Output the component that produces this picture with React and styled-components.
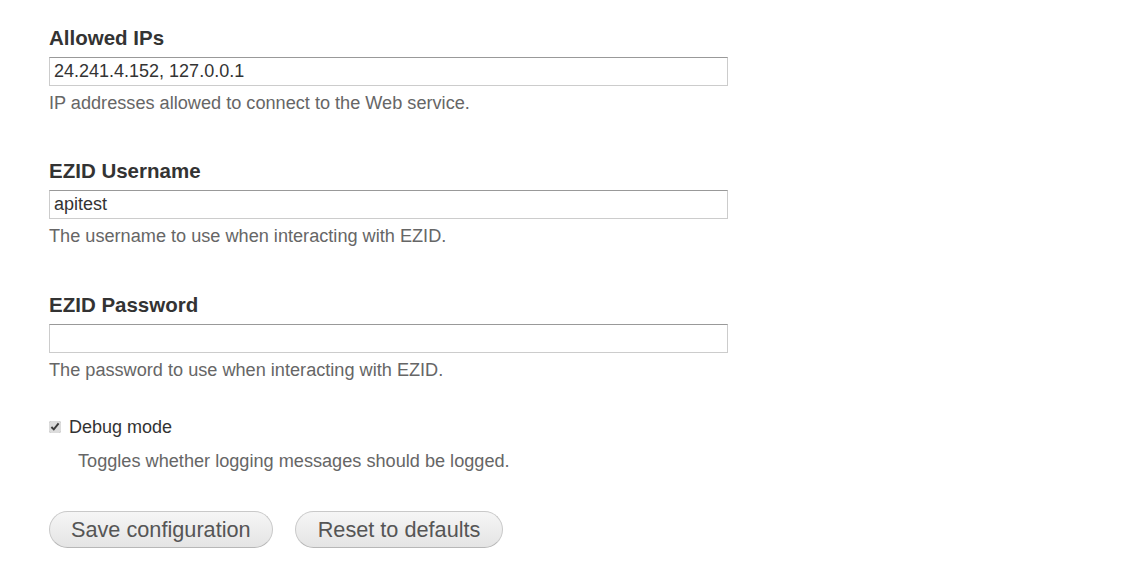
import styled, { createGlobalStyle } from 'styled-components';

const GlobalStyle = createGlobalStyle`
  body {
    margin: 0;
    background: #fff;
    font-family: "Liberation Sans", Arial, sans-serif;
    color: #333;
  }
`;

const Form = styled.form`
  padding: 24px 49px 0;
  width: 679px;
`;

const FormItem = styled.div`
  margin-bottom: ${(props) => props.$gap || 44}px;
`;

const Label = styled.label`
  display: block;
  font-size: 20.5px;
  font-weight: bold;
  color: #333;
  line-height: 28px;
  margin-bottom: 5px;
`;

const TextInput = styled.input`
  box-sizing: border-box;
  display: block;
  width: 679px;
  height: 29px;
  margin: 0;
  padding: 2px 4px;
  border: 1px solid #ccc;
  border-top-color: #999;
  border-radius: 0;
  font-family: "Liberation Sans", Arial, sans-serif;
  font-size: 18px;
  color: #333;
  outline: none;
`;

const Description = styled.div`
  font-size: 18.15px;
  line-height: 22px;
  color: #666;
  margin-top: ${(props) => (props.$indent ? 11 : 6)}px;
  padding-left: ${(props) => (props.$indent ? 29 : 0)}px;
`;

const CheckRow = styled.label`
  display: flex;
  align-items: center;
  gap: 8px;
  font-size: 18px;
  color: #333;
  line-height: 24px;
`;

const Checkbox = styled.input`
  width: 12px;
  height: 12px;
  margin: 0;
  accent-color: #dcdcdc;
`;

const Actions = styled.div`
  display: flex;
  gap: 22px;
`;

const Button = styled.button`
  height: 37px;
  padding: 0 ${(props) => (props.$wide ? 22 : 21)}px;
  border: 1px solid #c9c9c9;
  border-bottom-color: #b7b7b7;
  border-radius: 20px;
  background: linear-gradient(#f6f6f6, #e4e4e4);
  font-family: "Liberation Sans", Arial, sans-serif;
  font-size: 21.7px;
  color: #555;
  cursor: pointer;
`;

export default function App() {
  return (
    <>
      <GlobalStyle />
      <Form onSubmit={(e) => e.preventDefault()}>
        <FormItem $gap={43}>
          <Label>Allowed IPs</Label>
          <TextInput defaultValue="24.241.4.152, 127.0.0.1" />
          <Description>IP addresses allowed to connect to the Web service.</Description>
        </FormItem>
        <FormItem $gap={44}>
          <Label>EZID Username</Label>
          <TextInput defaultValue="apitest" />
          <Description>The username to use when interacting with EZID.</Description>
        </FormItem>
        <FormItem $gap={34}>
          <Label>EZID Password</Label>
          <TextInput type="password" />
          <Description>The password to use when interacting with EZID.</Description>
        </FormItem>
        <FormItem $gap={39}>
          <CheckRow>
            <Checkbox type="checkbox" defaultChecked />
            Debug mode
          </CheckRow>
          <Description $indent>Toggles whether logging messages should be logged.</Description>
        </FormItem>
        <Actions>
          <Button type="submit">Save configuration</Button>
          <Button type="button" $wide>Reset to defaults</Button>
        </Actions>
      </Form>
    </>
  );
}
